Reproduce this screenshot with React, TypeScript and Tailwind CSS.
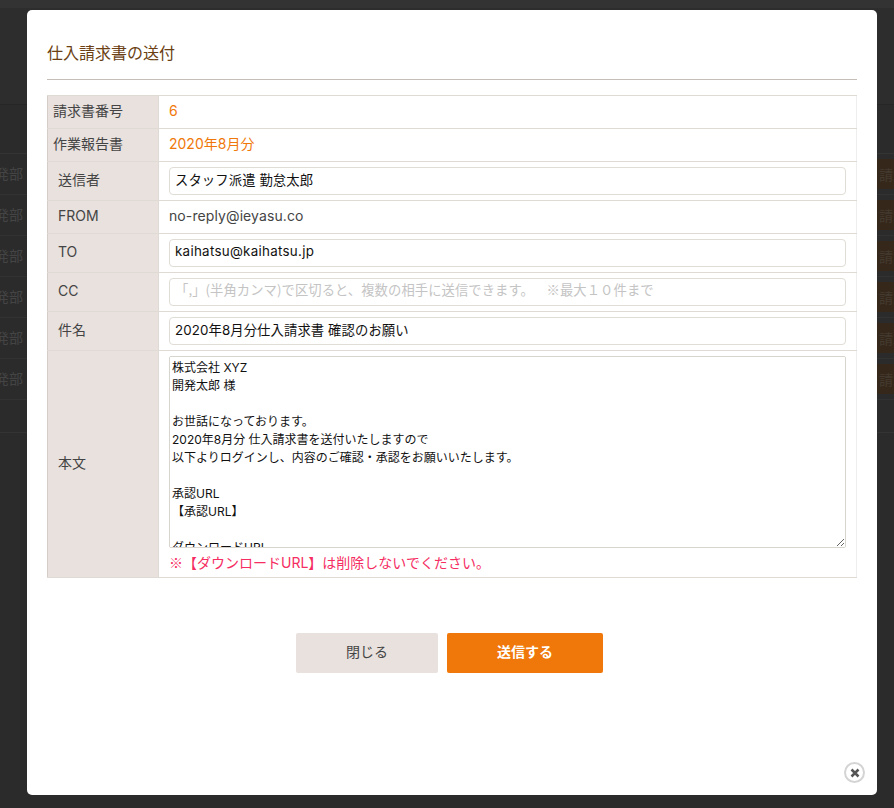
const fontStack = 'font-["Inter","Noto_Sans_CJK_JP",sans-serif]';

function Row({
  label,
  indent,
  className,
  children,
}: {
  label: string;
  indent?: boolean;
  className: string;
  children: React.ReactNode;
}) {
  return (
    <div className={`flex border-b border-[#e0dad5] ${className}`}>
      <div
        className={`w-[112px] shrink-0 flex items-center pb-[3px] bg-[#e8e1de] border-r border-[#e0dad5] border-l border-l-[#d5cdc7] text-[14px] text-[#444] ${
          indent ? 'pl-[10px]' : 'pl-[5px]'
        }`}
      >
        {label}
      </div>
      <div className="flex-1 min-w-0 flex flex-col justify-center px-[10px] border-r border-[#eeeeee]">{children}</div>
    </div>
  );
}

function TextInput({
  value,
  placeholder,
  className = 'tracking-[0.1px]',
}: {
  value?: string;
  placeholder?: string;
  className?: string;
}) {
  return (
    <input
      readOnly
      value={value}
      placeholder={placeholder}
      className={`w-full h-[28px] px-[5px] pb-[4px] bg-white border border-[#e0dcd6] rounded-[4px] text-[13.33px] text-[#111] placeholder:text-[#c4c4c4] placeholder:font-["Noto_Sans_CJK_JP",sans-serif] outline-none ${className}`}
    />
  );
}

const body = `株式会社 XYZ
開発太郎 様

お世話になっております。
2020年8月分 仕入請求書を送付いたしますので
以下よりログインし、内容のご確認・承認をお願いいたします。

承認URL
【承認URL】

ダウンロードURL
【ダウンロードURL】`;

export default function App() {
  return (
    <div className={`relative h-[808px] w-[894px] overflow-hidden bg-[#2b2b2b] ${fontStack}`}>
      {/* dimmed page behind the modal */}
      <div className="h-[8px] bg-[#333333]" />
      <div className="h-[97px] bg-[#2d2d2d] border-b border-[#262626]" />
      <div className="h-[49px] border-b border-[#343434]" />
      {[0, 1, 2, 3, 4, 5].map((i) => (
        <div key={i} className="flex h-[41px] items-center justify-between border-b border-[#323232]">
          <span className="ml-[-19px] pb-[2px] text-[14px] text-[#444444]">開発部</span>
          <span className="flex h-[30px] w-[17px] items-center overflow-hidden whitespace-nowrap bg-[#35281b] pl-[2px] text-[14px] text-[#443a2f]">
            請求
          </span>
        </div>
      ))}
      <div className="h-[33px] border-b border-[#343434]" />

      {/* modal */}
      <div className="absolute left-[27px] top-[10px] w-[850px] h-[785px] bg-white rounded-[5px] px-[20px]">
        <h2 className="pt-[32px] h-[70px] border-b border-[#c5bdb6] text-[16px] leading-[22px] text-[#6b3f13] font-normal">
          仕入請求書の送付
        </h2>

        <div className="mt-[15px] border-t border-[#e0dad5]">
          <Row label="請求書番号" className="h-[33px]">
            <span className="pb-[4px] text-[14px] text-[#f0780a]">6</span>
          </Row>
          <Row label="作業報告書" className="h-[33px]">
            <span className="pb-[4px] text-[14px] text-[#f0780a]">2020年8月分</span>
          </Row>
          <Row label="送信者" indent className="h-[39px]">
            <TextInput value="スタッフ派遣 勤怠太郎" />
          </Row>
          <Row label="FROM" indent className="h-[33px]">
            <span className="pb-[4px] text-[14px] tracking-[0.1px] text-[#444]">no-reply@ieyasu.co</span>
          </Row>
          <Row label="TO" indent className="h-[39px]">
            <TextInput value="kaihatsu@kaihatsu.jp" className="tracking-[0.3px]" />
          </Row>
          <Row label="CC" indent className="h-[39px]">
            <TextInput
              placeholder="「,」(半角カンマ)で区切ると、複数の相手に送信できます。　  ※最大１０件まで"
              className="tracking-[0.05px]"
            />
          </Row>
          <Row label="件名" indent className="h-[39px]">
            <TextInput value="2020年8月分仕入請求書 確認のお願い" />
          </Row>
          <Row label="本文" indent className="h-[227px]">
            <textarea
              readOnly
              value={body}
              className="block w-full h-[192px] px-[2px] py-[2px] bg-white border border-[#d8d4ce] rounded-[2px] text-[12px] leading-[18px] text-[#111] outline-none"
            />
            <p className="mt-[4px] text-[14px] leading-[20px] text-[#f52d62]">
              <span className='font-["Noto_Sans_CJK_JP",sans-serif]'>※</span>【ダウンロードURL】は削除しないでください。
            </p>
          </Row>
        </div>

        <div className="mt-[55px] pr-[5px] flex justify-center gap-[9px]">
          <button className="w-[142px] h-[40px] pb-[4px] rounded-[2px] bg-[#e8e1de] text-[14px] text-[#444]">閉じる</button>
          <button className="w-[156px] h-[40px] pb-[4px] rounded-[2px] bg-[#f0780a] text-[14px] font-bold text-white">送信する</button>
        </div>

        {/* close icon */}
        <button className="absolute right-[12px] bottom-[12px] w-[21px] h-[21px] flex items-center justify-center rounded-full bg-white border-2 border-[#d4d4d4]">
          <svg width="10" height="10" viewBox="0 0 10 10">
            <path d="M1.5 1.5 8.5 8.5M8.5 1.5 1.5 8.5" stroke="#555" strokeWidth="2.5" fill="none" />
          </svg>
        </button>
      </div>
    </div>
  );
}
